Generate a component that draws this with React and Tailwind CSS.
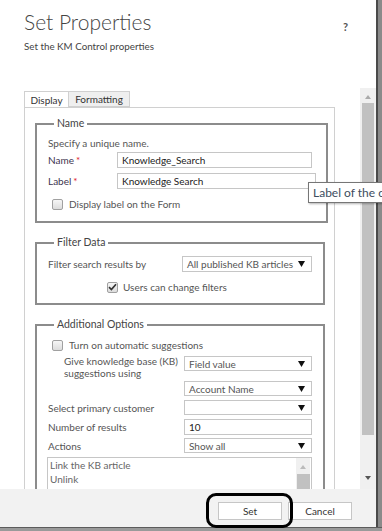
import React from 'react';

const FONT = { fontFamily: 'Lato, "Open Sans", Arial, sans-serif' };

const Arrow = () => (
    <svg width="7" height="6" viewBox="0 0 7 6" className="shrink-0"><path d="M0 0H7L3.5 6Z" fill="#111" /></svg>
);

const Checkbox = ({ checked }) => (
    <span className="w-[11px] h-[11px] rounded-[2px] border border-[#a0a0a0] bg-gradient-to-b from-[#f6f6f6] to-[#dcdcdc] flex items-center justify-center shrink-0">
        {checked && (
            <svg width="9" height="8" viewBox="0 0 9 8"><path d="M1 4.2L3.4 6.6L8 1.2" stroke="#333" strokeWidth="1.7" fill="none" /></svg>
        )}
    </span>
);

const Select = ({ value, className = '' }) => (
    <div className={`h-[15px] border border-[#c6c6c6] bg-white flex items-center justify-between pl-[4px] pr-[6px] text-[10px] text-[#555] leading-none whitespace-nowrap ${className}`}>
        <span>{value}</span>
        <Arrow />
    </div>
);

const Input = ({ value, className = '' }) => (
    <div className={`h-[16px] border border-[#c6c6c6] bg-white flex items-center pl-[4px] text-[10px] text-[#222] leading-none whitespace-nowrap ${className}`}>
        {value}
    </div>
);

const Group = ({ title, className = '', children }) => (
    <fieldset className={`w-[290px] border-2 border-[#8c8c8c] pl-[11px] pr-[10px] ${className}`}>
        <legend className="ml-[6px] px-[3px] text-[10.5px] leading-[13px] text-[#444]">{title}</legend>
        {children}
    </fieldset>
);

const Req = ({ children }) => (
    <span className="w-[69px] shrink-0 text-[10px] leading-[14px] text-[#3c3450]">
        {children}<span className="text-[#e0202a] ml-[2px]">*</span>
    </span>
);

export default function App() {
    return (
        <div className="w-[382px] h-[531px] bg-[#7d7d7d] flex flex-col overflow-hidden relative" style={FONT}>
            <div className="flex h-[527px]">
                <div className="w-[376px] bg-white flex flex-col">
                    {/* header */}
                    <header className="h-[88px] shrink-0 pl-6 pr-[28px] pt-[8px] flex justify-between items-start">
                        <div>
                            <h1 className="text-[21px] font-light leading-[28px] text-[#444]">Set Properties</h1>
                            <p className="text-[9.8px] leading-[14px] mt-[3px] text-[#444] whitespace-nowrap">Set the KM Control properties</p>
                        </div>
                        <span className="text-[11px] font-bold text-[#555] mt-[11px]">?</span>
                    </header>

                    {/* scrolling body */}
                    <div className="h-[401px] shrink-0 flex">
                        <div className="flex-1 overflow-hidden pl-6 pt-[3px]">
                            <div className="flex text-[10px] text-[#333] leading-none">
                                <div className="w-[45px] h-[16px] border border-b-0 border-[#d0d0d0] bg-white flex items-center justify-center">Display</div>
                                <div className="w-[61px] h-[16px] border border-l-0 border-[#d0d0d0] bg-[#efefef] flex items-center justify-center">Formatting</div>
                            </div>
                            <div className="w-[311px] h-[400px] border border-[#d0d0d0] pl-[10px] pt-[9px]">
                                <Group title="Name" className="pb-[10px]">
                                    <p className="h-[14px] mt-[6px] text-[10px] leading-[14px] text-[#555]">Specify a unique name.</p>
                                    <div className="flex items-center mt-[2px]">
                                        <Req>Name</Req>
                                        <Input value="Knowledge_Search" className="w-[195px]" />
                                    </div>
                                    <div className="flex items-center mt-[5px]">
                                        <Req>Label</Req>
                                        <Input value="Knowledge Search" className="w-[199px]" />
                                    </div>
                                    <label className="flex items-center gap-[6px] h-[14px] mt-[8px] ml-[4px] text-[10px] text-[#555]">
                                        <Checkbox />Display label on the Form
                                    </label>
                                </Group>

                                <Group title="Filter Data" className="mt-[13px] pb-[9px]">
                                    <div className="flex items-center mt-[7px]">
                                        <span className="w-[134px] text-[10px] leading-[14px] text-[#555]">Filter search results by</span>
                                        <Select value="All published KB articles" className="w-[130px] h-[16px]" />
                                    </div>
                                    <label className="flex items-center gap-[5px] h-[14px] mt-[8px] ml-[59px] text-[10px] text-[#555]">
                                        <Checkbox checked />Users can change filters
                                    </label>
                                </Group>

                                <Group title="Additional Options" className="mt-[13px] pb-[10px]">
                                    <label className="flex items-center gap-[6px] h-[14px] mt-[7px] ml-[4px] text-[10px] text-[#555]">
                                        <Checkbox />Turn on automatic suggestions
                                    </label>
                                    <div className="flex items-start mt-[3px]">
                                        <span className="w-[136px] pl-[16px] text-[10px] leading-[12px] text-[#555]">Give knowledge base (KB)<br />suggestions using</span>
                                        <Select value="Field value" className="w-[128px] mt-[1px]" />
                                    </div>
                                    <Select value="Account Name" className="w-[128px] ml-[136px] mt-[2px]" />
                                    <div className="flex items-center mt-[4px]">
                                        <span className="w-[136px] text-[10px] leading-[14px] text-[#555]">Select primary customer</span>
                                        <Select value="" className="w-[128px]" />
                                    </div>
                                    <div className="flex items-center mt-[4px]">
                                        <span className="w-[136px] text-[10px] leading-[14px] text-[#555]">Number of results</span>
                                        <Input value="10" className="w-[128px] h-[15px]" />
                                    </div>
                                    <div className="flex items-center mt-[3px]">
                                        <span className="w-[136px] text-[10px] leading-[14px] text-[#555]">Actions</span>
                                        <Select value="Show all" className="w-[128px]" />
                                    </div>
                                    <div className="w-[265px] h-[60px] -ml-[1px] mt-[4px] border border-[#c6c6c6] flex">
                                        <div className="flex-1 pl-[2px] pt-[0px] text-[10px] leading-[14px] text-[#666]">
                                            <p>Link the KB article</p>
                                            <p>Unlink</p>
                                        </div>
                                        <div className="w-[14px] mr-[1px] flex flex-col items-center bg-[#f0f0f0]">
                                            <svg width="6" height="4" viewBox="0 0 6 4" className="mt-[7px]"><path d="M0 4H6L3 0Z" fill="#bbb" /></svg>
                                            <div className="w-[13px] h-[30px] mt-[5px] bg-[#c1c1c1]" />
                                        </div>
                                    </div>
                                </Group>
                            </div>
                        </div>

                        {/* dialog scrollbar */}
                        <div className="w-[16px] bg-[#f0f0f0] flex flex-col items-center">
                            <svg width="6" height="4" viewBox="0 0 6 4" className="mt-[7px]"><path d="M0 4H6L3 0Z" fill="#aaa" /></svg>
                            <div className="w-[12px] h-[332px] mt-[4px] bg-[#c1c1c1]" />
                            <svg width="6" height="4" viewBox="0 0 6 4" className="mt-[41px]"><path d="M0 0H6L3 4Z" fill="#555" /></svg>
                        </div>
                    </div>

                    {/* footer */}
                    <footer className="flex-1 bg-[#f2f2f2] flex justify-end items-start pt-[13px] pr-[24px] gap-[6px] text-[10px] text-[#333]">
                        <button className="w-[64px] h-[18px] border border-[#c6c6c6] bg-white leading-none">Set</button>
                        <button className="w-[64px] h-[18px] border border-[#c6c6c6] bg-white leading-none">Cancel</button>
                    </footer>
                </div>
                <div className="flex-1 bg-[#8a8a8a] border-l-2 border-[#4a4a4a]" />
            </div>
            <div className="flex-1 border-t border-[#5c5c5c] bg-[#9a9a9a]" />

            {/* tooltip over the label field */}
            <div className="absolute left-[308px] top-[182px] h-[21px] w-[90px] border border-[#767676] bg-white shadow-[1px_1px_2px_rgba(0,0,0,0.3)] pl-[4px] flex items-center text-[12px] text-[#3d4d5e] whitespace-nowrap">
                Label of the control
            </div>

            {/* hand-drawn highlight round the Set button */}
            <div className="absolute left-[206px] top-[493px] w-[87px] h-[35px] border-[3px] border-black rounded-[10px]" />
        </div>
    );
}
